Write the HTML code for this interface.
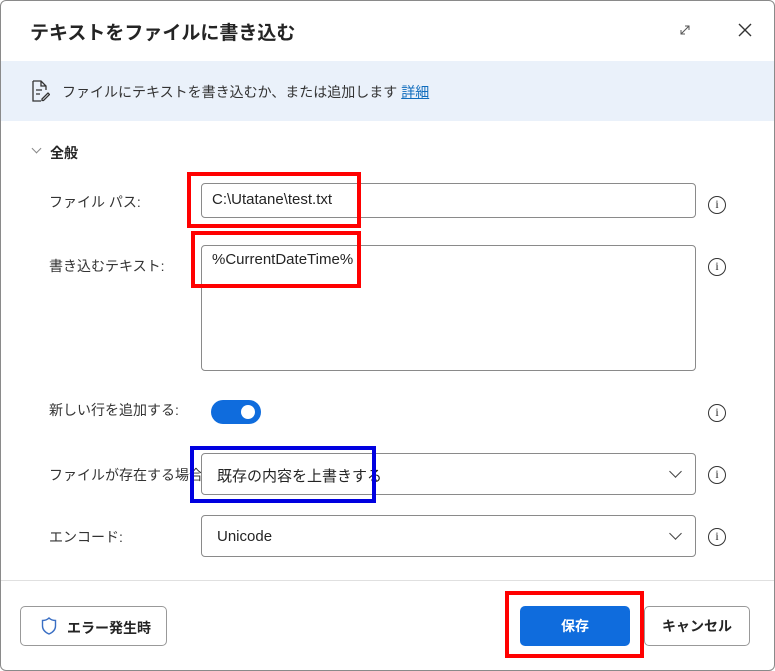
<!DOCTYPE html><html><head><meta charset="utf-8"><style>
*{box-sizing:border-box;margin:0;padding:0}
body{width:775px;height:671px;background:#fff;font-family:"Liberation Sans","Noto Sans CJK JP",sans-serif;color:#242424;position:relative;overflow:hidden;font-size:14px}
.a{position:absolute}
.frame{left:0;top:0;width:775px;height:671px;border:1px solid #8a8a8a;border-radius:6px}
.inp{border:1px solid #8a8a8a;border-radius:4px;background:#fff}
.lbl{font-size:14px;color:#333}
.info{width:18px;height:18px;border:1.5px solid #333;border-radius:50%;font-size:12px;text-align:center;line-height:15px;font-family:"Liberation Serif",serif}
.red{border:4px solid #f00}
.chev{width:9px;height:9px;border-right:1.5px solid #444;border-bottom:1.5px solid #444;transform:rotate(45deg)}
</style></head><body>
<div class="a frame"></div>
<div class="a" style="left:30px;top:18px;font-size:19px;font-weight:bold">テキストをファイルに書き込む</div>
<svg class="a" style="left:679px;top:24px" width="12" height="12" viewBox="0 0 12 12"><path d="M2 10L10 2M6 2h4v4M2 6v4h4" fill="none" stroke="#555" stroke-width="1"/></svg>
<svg class="a" style="left:738px;top:23px" width="14" height="14" viewBox="0 0 14 14"><path d="M1 1L13 13M13 1L1 13" stroke="#333" stroke-width="1.4"/></svg>
<div class="a" style="left:1px;top:61px;width:773px;height:60px;background:#eaf1fa"></div>
<svg class="a" style="left:30px;top:80px" width="20" height="22" viewBox="0 0 20 22"><path d="M3 1h8l5 5v4M3 1v20h8M11 1v5h5M6 10h6M6 14h4" fill="none" stroke="#333" stroke-width="1.3"/><path d="M12 19l6-6 1.5 1.5-6 6H12z" fill="none" stroke="#333" stroke-width="1.3"/></svg>
<div class="a" style="left:62px;top:82px;font-size:14px;color:#333">ファイルにテキストを書き込むか、または追加します <span style="color:#0f6cbd;text-decoration:underline">詳細</span></div>
<div class="a chev" style="left:33px;top:145px;width:7px;height:7px;border-color:#888"></div>
<div class="a" style="left:50px;top:143px;font-size:14px;font-weight:bold">全般</div>
<div class="a lbl" style="left:49px;top:192px">ファイル パス:</div>
<div class="a inp" style="left:201px;top:183px;width:495px;height:35px"></div>
<div class="a" style="left:212px;top:191px;font-size:15px">C:\Utatane\test.txt</div>
<div class="a red" style="left:187px;top:172px;width:174px;height:56px"></div>
<div class="a info" style="left:708px;top:196px">i</div>
<div class="a lbl" style="left:49px;top:256px">書き込むテキスト:</div>
<div class="a inp" style="left:201px;top:245px;width:495px;height:126px"></div>
<div class="a" style="left:212px;top:251px;font-size:15px">%CurrentDateTime%</div>
<div class="a red" style="left:191px;top:231px;width:170px;height:57px"></div>
<div class="a info" style="left:708px;top:258px">i</div>
<div class="a lbl" style="left:49px;top:400px">新しい行を追加する:</div>
<div class="a" style="left:211px;top:400px;width:50px;height:24px;border-radius:12px;background:#0f6cdd"></div>
<div class="a" style="left:241px;top:405px;width:14px;height:14px;border-radius:50%;background:#fff"></div>
<div class="a info" style="left:708px;top:404px">i</div>
<div class="a lbl" style="left:49px;top:465px">ファイルが存在する場合:</div>
<div class="a inp" style="left:201px;top:453px;width:495px;height:42px"></div>
<div class="a" style="left:217px;top:465px;font-size:15px">既存の内容を上書きする</div>
<div class="a chev" style="left:671px;top:467px"></div>
<div class="a" style="left:190px;top:446px;width:186px;height:57px;border:4px solid #0000e0"></div>
<div class="a info" style="left:708px;top:466px">i</div>
<div class="a lbl" style="left:49px;top:527px">エンコード:</div>
<div class="a inp" style="left:201px;top:515px;width:495px;height:42px"></div>
<div class="a" style="left:217px;top:528px;font-size:15px">Unicode</div>
<div class="a chev" style="left:671px;top:529px"></div>
<div class="a info" style="left:708px;top:528px">i</div>
<div class="a" style="left:1px;top:580px;width:773px;height:1px;background:#e0e0e0"></div>
<div class="a inp" style="left:20px;top:606px;width:147px;height:40px;border-color:#999;border-radius:5px"></div>
<svg class="a" style="left:41px;top:617px" width="16" height="18" viewBox="0 0 16 18"><path d="M8 1C6 3 3.5 3.5 1.5 3.5V9c0 4 3 6.5 6.5 8 3.5-1.5 6.5-4 6.5-8V3.5C12.5 3.5 10 3 8 1z" fill="none" stroke="#3a6fc4" stroke-width="1.4"/></svg>
<div class="a" style="left:67px;top:618px;font-size:14px;font-weight:bold">エラー発生時</div>
<div class="a" style="left:520px;top:606px;width:110px;height:40px;background:#0f6cdd;border-radius:5px;color:#fff;font-weight:bold;text-align:center;line-height:40px">保存</div>
<div class="a red" style="left:505px;top:591px;width:139px;height:67px"></div>
<div class="a inp" style="left:644px;top:606px;width:106px;height:40px;border-color:#999;border-radius:5px;text-align:center;line-height:38px;font-weight:bold">キャンセル</div>
</body></html>
